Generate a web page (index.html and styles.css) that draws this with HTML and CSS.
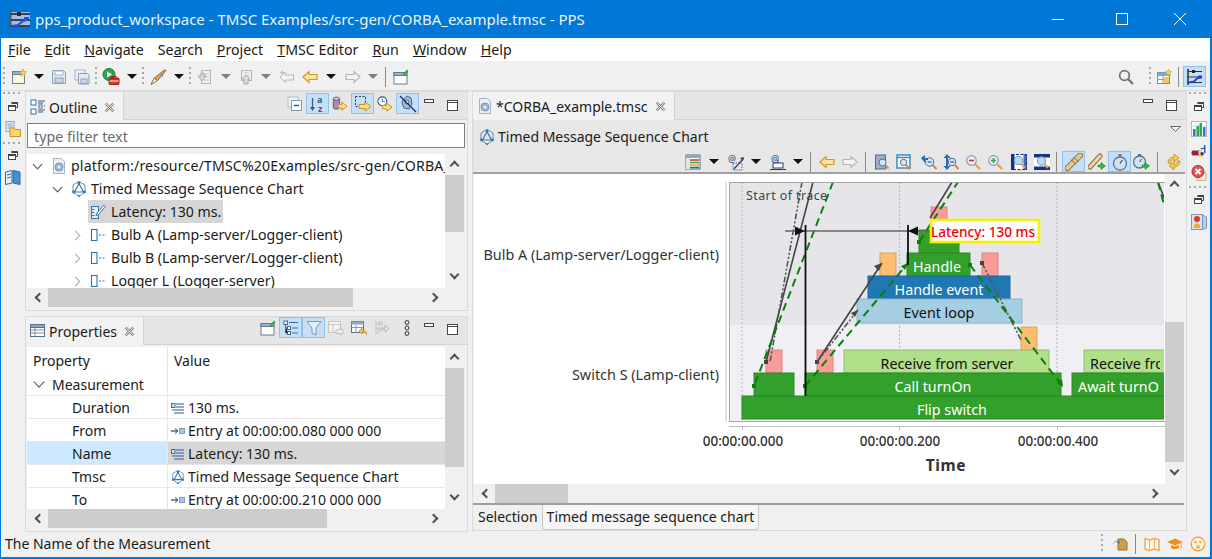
FILE: index.html
```html
<!DOCTYPE html>
<html lang="en">
<head>
<meta charset="utf-8">
<title>PPS</title>
<link rel="stylesheet" href="styles.css">
</head>
<body>
<svg class="defs" width="0" height="0" aria-hidden="true">
  <symbol id="i-logo" viewBox="0 0 22 22"><rect x="2" y="4" width="19" height="15" fill="#9dc0e4"/><path d="M1.500 2v18" stroke="#4a5866" stroke-width="2"/><path d="M2 6h19M2 12h19M2 18h19" stroke="#39424e" stroke-width="1.800"/><rect x="8" y="4" width="4" height="4" fill="#26303a"/><path d="M3 18l6-1 5-4 6-2" stroke="#2a50d8" stroke-width="2.200" fill="none"/><rect x="15" y="9" width="5" height="3" fill="#2a50d8"/></symbol>
  <symbol id="i-new" viewBox="0 0 16 16"><rect x="1.500" y="2.500" width="12" height="12" fill="#fdf6dc" stroke="#6d7f92"/><rect x="1.500" y="2.500" width="12" height="3" fill="#8fb2d6" stroke="#6d7f92"/><path d="M12 0l1 2.500 2.500.5-2 1.500.5 2.500-2-1.300-2 1.300.5-2.500-2-1.500 2.500-.5z" fill="#f6d659" stroke="#c79a2a" stroke-width=".6"/></symbol>
  <symbol id="i-save" viewBox="0 0 16 16"><path d="M1.500 1.500h11l2 2v11h-13z" fill="#e4ebf3" stroke="#8aa0bb"/><rect x="4" y="2" width="8" height="4" fill="#fff" stroke="#a5b6ca"/><rect x="4" y="9" width="8" height="5" fill="#c9d6e4" stroke="#8aa0bb"/></symbol>
  <symbol id="i-saveall" viewBox="0 0 16 16"><rect x="1" y="1" width="10" height="10" fill="#eef2f6" stroke="#a3b2c4"/><path d="M4.500 4.500h9l1.500 1.500v9h-10.500z" fill="#e4ebf3" stroke="#8aa0bb"/><rect x="7" y="10" width="6" height="4.500" fill="#c9d6e4" stroke="#8aa0bb"/></symbol>
  <symbol id="i-run" viewBox="0 0 18 18"><circle cx="7" cy="6.500" r="6" fill="#2ea44f" stroke="#1c7a36"/><path d="M5 3.500l5 3-5 3z" fill="#fff"/><rect x="7" y="10" width="10" height="6.500" rx="1" fill="#d9342b" stroke="#9c1f18"/><rect x="10" y="8.500" width="4" height="2" fill="none" stroke="#9c1f18"/><path d="M7.500 13h9" stroke="#fff"/></symbol>
  <symbol id="i-pen" viewBox="0 0 18 18"><path d="M16 1.500l1 1-8.500 10-3-2.500z" fill="#d9a95a" stroke="#8b6b35"/><path d="M5.500 10l3 2.500-3 2-3.500 2 1.500-3.500z" fill="#f5e9c9" stroke="#8b6b35"/><path d="M12 6l2 2" stroke="#6a85a8" stroke-width="2"/></symbol>
  <symbol id="i-down" viewBox="0 0 16 16"><rect x="5.500" y="1.500" width="9" height="13" fill="#f1f1f1" stroke="#b5b5b5"/><path d="M8 5h5M8 8h5M8 11h5" stroke="#c2c2c2"/><path d="M2 7h3v-3h3v3h2l-4 5z" fill="#d8d8d8" stroke="#aaa"/></symbol>
  <symbol id="i-up" viewBox="0 0 16 16"><rect x="3.500" y="1.500" width="10" height="10" fill="#f1f1f1" stroke="#b5b5b5"/><path d="M6 4h5M6 7h5" stroke="#c2c2c2"/><path d="M6 15v-5h-2l4-4 4 4h-2v5z" fill="#dedede" stroke="#aaa"/></symbol>
  <symbol id="i-back-off" viewBox="0 0 16 16"><path d="M1 8l5.500-4.500v2.500h8v5h-8v2.500z" fill="#f4f4f4" stroke="#b7b7b7"/><path d="M3 1l.7 1.800 1.800.7-1.800.7-.7 1.800-.7-1.800-1.800-.7 1.800-.7z" fill="#b7b7b7"/></symbol>
  <symbol id="i-back" viewBox="0 0 16 16"><path d="M1 8l6-5.500v3h8v5h-8v3z" fill="#fbe3a2" stroke="#cf9a21" stroke-width="1.200"/></symbol>
  <symbol id="i-fwd" viewBox="0 0 16 16"><path d="M15 8l-6-5.500v3h-8v5h8v3z" fill="#f3f3f3" stroke="#b5b5b5" stroke-width="1.200"/></symbol>
  <symbol id="i-persp" viewBox="0 0 16 16"><rect x="1" y="3.500" width="13" height="11.500" fill="#fff" stroke="#6a7a8a"/><rect x="1" y="3.500" width="13" height="3" fill="#8db1d8" stroke="#6a7a8a"/><path d="M14 .5l1.500 1.500-3 3.500-1 1-1.500-.5.500-1.500z" fill="#3aa04a"/></symbol>
  <symbol id="i-search" viewBox="0 0 16 16"><circle cx="6.500" cy="6.500" r="4.800" fill="none" stroke="#777" stroke-width="1.800"/><path d="M10 10l5 5" stroke="#777" stroke-width="2.400"/></symbol>
  <symbol id="i-openp" viewBox="0 0 16 16"><rect x="1.500" y="3.500" width="12" height="11" fill="#fff" stroke="#7a8a9a"/><rect x="1.500" y="3.500" width="12" height="3.500" fill="#7fa8d4"/><path d="M1.500 10.500h12M7 7v7.500" stroke="#8a98a8"/><rect x="8" y="8" width="5" height="6" fill="#f2c56a"/><path d="M12.500 0l1 2.200 2.300.5-1.800 1.500.5 2.300-2-1.200-2 1.200.5-2.300-1.800-1.500 2.300-.5z" fill="#f6d659" stroke="#c79a2a" stroke-width=".5"/></symbol>
  <symbol id="i-tmsc-p" viewBox="0 0 18 18"><path d="M2 1v16" stroke="#222" stroke-width="1.400"/><path d="M2 3.500h14M2 9h14M2 14.500h14" stroke="#333" stroke-width="1.200"/><rect x="6" y="2" width="3" height="3" fill="#222"/><path d="M3 14.500l5-1 3-3 5-1.500" stroke="#2440cf" stroke-width="1.800" fill="none"/><rect x="12" y="7.500" width="4" height="3" fill="#2440cf"/></symbol>
  <symbol id="i-restore" viewBox="0 0 12 12"><path d="M4.500 1.500h6v5h-2" fill="none" stroke="#444"/><rect x="1.500" y="4.500" width="7" height="5" fill="#fff" stroke="#444"/><path d="M4.500 1.500h6v1.500h-6zM1.500 4.500h7v1.500h-7z" fill="#444"/></symbol>
  <symbol id="i-folder" viewBox="0 0 16 16"><rect x="1" y="0.500" width="8" height="10" fill="#e8eef6" stroke="#8aa4c4"/><path d="M2.500 3h5M2.500 5h5M2.500 7h5" stroke="#8aa4c4"/><path d="M5 7h4l1 1.500h5.500v7h-10.500z" fill="#fbd66b" stroke="#c89524"/></symbol>
  <symbol id="i-book" viewBox="0 0 16 16"><path d="M.5 2l6.500-1.500v12.500l-6.500 1.500z" fill="#e8f0fa" stroke="#2a6aa8"/><path d="M8 .5l7 1.500v12.500l-7-1.500z" fill="#4a90d0" stroke="#2a6aa8"/><path d="M2 5l4-1M2 8l4-1" stroke="#2a6aa8"/></symbol>
  <symbol id="i-chart" viewBox="0 0 16 16"><rect x=".5" y=".5" width="15" height="15" fill="#fff" stroke="#a8b4c4"/><path d="M.5 5h15M.5 10h15M5 .5v15M10 .5v15" stroke="#d6dce4"/><rect x="2" y="8" width="2.500" height="7" fill="#2a7fc0"/><rect x="5.500" y="5" width="2.500" height="10" fill="#2ea84a"/><rect x="8.500" y="2" width="2.500" height="13" fill="#2ea84a"/><rect x="12" y="6" width="2.500" height="9" fill="#2a7fc0"/></symbol>
  <symbol id="i-tasks" viewBox="0 0 18 16"><circle cx="3.500" cy="9" r="3" fill="#a81c36"/><circle cx="8" cy="9" r="3" fill="#7d1f58"/><path d="M8 7l4-1 2 7-5 1z" fill="#f6d659"/><path d="M11 4.500l4-1M15.500 0v9" stroke="#2440a8" stroke-width="1.400"/><circle cx="12.500" cy="10" r="2" fill="#2a3a90"/></symbol>
  <symbol id="i-error" viewBox="0 0 16 16"><path d="M6 8h9v7.500h-9z" fill="#f3ead0" stroke="#c2b892"/><circle cx="7" cy="6.500" r="6" fill="#e05a52" stroke="#b52c24"/><path d="M4.500 4l5 5M9.500 4l-5 5" stroke="#fff" stroke-width="1.800"/></symbol>
  <symbol id="i-red" viewBox="0 0 16 16"><rect x=".5" y=".5" width="11" height="15" fill="#d7e2ee" stroke="#7a97b8"/><path d="M11.500 1l4 2v11l-4 1.500z" fill="#b8cfe6" stroke="#7a97b8"/><circle cx="6" cy="5" r="3" fill="#e0342a"/><path d="M3 14v-3l3-2 3 2v3z" fill="#f4a830"/></symbol>
  <symbol id="i-outline" viewBox="0 0 16 16"><g fill="#fff" stroke="#2e73b0"><rect x="1" y="1" width="5" height="5"/><rect x="1" y="10" width="5" height="5"/></g><rect x="9" y="6" width="3" height="3" fill="#fff" stroke="#2e73b0"/><path d="M8 2h7M8 4h5M14 7h1M8 11h7M8 13h5" stroke="#4a5560"/></symbol>
  <symbol id="i-collapse" viewBox="0 0 16 16"><rect x="1" y="1" width="10" height="10" fill="#eef2f6" stroke="#b3c0cf"/><rect x="4.500" y="4.500" width="10" height="10" fill="#fff" stroke="#7f9ab8"/><path d="M7 9.500h5" stroke="#2a5c92" stroke-width="1.500"/></symbol>
  <symbol id="i-db" viewBox="0 0 18 18"><path d="M1.500 3v10c0 2.500 7 2.500 7 0v-10z" fill="#a68bb8" stroke="#5f4a78"/><ellipse cx="5" cy="3" rx="3.500" ry="1.800" fill="#d8c8e0" stroke="#5f4a78"/><path d="M7 9.500h4v-2.500l6 4.500-6 4.500v-2.500h-4z" fill="#f7dc8a" stroke="#c4901f"/></symbol>
  <symbol id="i-sel" viewBox="0 0 18 18"><rect x="1.500" y="1.500" width="10" height="10" fill="none" stroke="#1e3f78" stroke-dasharray="2 1.500"/><path d="M5 9.500h6v-2.500l6 4.500-6 4.500v-2.500h-6z" fill="#f7dc8a" stroke="#c4901f"/></symbol>
  <symbol id="i-clock" viewBox="0 0 18 18"><circle cx="6" cy="6" r="5" fill="#fff" stroke="#2a5c92" stroke-width="1.200"/><path d="M6 3v3.500h2.500" stroke="#2a5c92" fill="none"/><path d="M6 10.500h5v-2.500l6 4.500-6 4.500v-2.500h-5z" fill="#f7dc8a" stroke="#c4901f"/></symbol>
  <symbol id="i-nofilter" viewBox="0 0 18 18"><path d="M4 5l4-4 4 2 1 6-3 5-5-1-2-5z" fill="#a8bcd4" stroke="#4a6484"/><circle cx="8" cy="7" r="2" fill="#fff" stroke="#4a6484"/><path d="M1 1l16 16" stroke="#1a3a6a" stroke-width="1.500"/></symbol>
  <symbol id="i-min" viewBox="0 0 12 8"><rect x=".5" y=".5" width="9" height="3" fill="#fff" stroke="#444"/></symbol>
  <symbol id="i-max" viewBox="0 0 12 12"><rect x=".5" y=".5" width="10" height="10" fill="#fff" stroke="#444"/><path d="M.5 2.500h10" stroke="#444"/></symbol>
  <symbol id="i-x" viewBox="0 0 10 10"><path d="M1.500 1.500l7 7M8.500 1.500l-7 7" stroke="#8a8a8a" stroke-width="2.400"/><path d="M1.500 1.500l7 7M8.500 1.500l-7 7" stroke="#f3f3f3" stroke-width=".8"/></symbol>
  <symbol id="i-gear" viewBox="0 0 16 16"><path d="M2.500.5h8l3 3v12h-11z" fill="#e9eef5" stroke="#a7b4c4"/><circle cx="8" cy="9" r="4" fill="#9db6d2" stroke="#7a95b5"/><circle cx="8" cy="9" r="1.500" fill="#e9eef5"/></symbol>
  <symbol id="i-tm" viewBox="0 0 16 16"><path d="M8 2.500l4.500 8.500h-9z" fill="none" stroke="#3a74a8" stroke-width="1.200"/><path d="M8 .5l6 3.500v7l-6 4.500-6-4.500v-7z" fill="none" stroke="#3a74a8" stroke-width=".8"/><circle cx="8" cy="2" r="1.400" fill="#3a74a8"/><circle cx="2.500" cy="11" r="1.400" fill="#3a74a8"/><circle cx="13.500" cy="11" r="1.400" fill="#3a74a8"/><circle cx="8" cy="15" r="1" fill="#3a74a8"/></symbol>
  <symbol id="i-meas" viewBox="0 0 16 16"><rect x="1.500" y="2.500" width="7" height="12" fill="#e4eefa" stroke="#3a74a8"/><path d="M1.500 5.500h3M1.500 8.500h3M1.500 11.500h3" stroke="#3a74a8"/><path d="M14 1l1.500 1.500-7 8-2.500 1 1-2.500z" fill="#fff" stroke="#3a74a8"/></symbol>
  <symbol id="i-life" viewBox="0 0 16 16"><rect x="1.500" y="2.500" width="5.500" height="11" fill="#fff" stroke="#2e73b0" stroke-width="1.100"/><path d="M9 8h2M12.500 8h2" stroke="#2e73b0"/></symbol>
  <symbol id="i-table" viewBox="0 0 16 16"><rect x=".5" y="1.500" width="14" height="12" fill="#fff" stroke="#5c6f88"/><rect x=".5" y="1.500" width="14" height="3" fill="#8fa8c6" stroke="#5c6f88"/><path d="M.5 7h14M.5 10h14M5 4.500v9" stroke="#7f93ab"/></symbol>
  <symbol id="i-tree" viewBox="0 0 16 16"><g fill="#fff" stroke="#3e6a96"><rect x="1" y="1" width="3.500" height="3.500"/><rect x="4.500" y="6.500" width="3" height="3"/><rect x="4.500" y="11.500" width="3" height="3"/></g><path d="M2.500 4.500v8.500h2M2.500 8h2M6 2.500h9M9 8h6M9 13h6" stroke="#3e6a96"/></symbol>
  <symbol id="i-funnel" viewBox="0 0 16 16"><path d="M1 1.500h14l-5 6.500v7l-4-2v-5z" fill="#e2eef8" stroke="#7a95b5"/></symbol>
  <symbol id="i-pin-off" viewBox="0 0 16 16"><rect x=".5" y="1.500" width="12" height="11" fill="#f2f2f2" stroke="#c4c4c4"/><path d="M.5 4.500h12M5 4.500v8" stroke="#c9c9c9"/><path d="M8 10l5-.5v-2l3 4-3 4v-2h-5z" fill="#ececec" stroke="#bdbdbd"/></symbol>
  <symbol id="i-undo" viewBox="0 0 16 16"><rect x=".5" y="1.500" width="12" height="11" fill="#fff" stroke="#5c6f88"/><rect x=".5" y="1.500" width="12" height="3" fill="#8fa8c6"/><path d="M.5 7.500h12M5 4.500v8" stroke="#8a9bb0"/><path d="M8 11l3-3v2c3 0 4.500 1.500 4.500 4.500-1-2-2.500-2.500-4.500-2.500v2z" fill="#f6c94e" stroke="#c18b16" stroke-width=".7"/></symbol>
  <symbol id="i-tree-off" viewBox="0 0 16 16"><path d="M2 1v13M2 4h3M2 9h3M2 13h3" stroke="#c0c0c0"/><rect x="5" y="2" width="3" height="3" fill="none" stroke="#bdbdbd"/><rect x="5" y="8" width="3" height="3" fill="none" stroke="#bdbdbd"/><path d="M8 8h3V5l4 3.500-4 3.500V9H8z" fill="#e8e8e8" stroke="#b9b9b9"/></symbol>
  <symbol id="i-dots" viewBox="0 0 8 16"><g fill="#fff" stroke="#5b5b5b" stroke-width="1.300"><circle cx="4" cy="2.500" r="1.800"/><circle cx="4" cy="8" r="1.800"/><circle cx="4" cy="13.500" r="1.800"/></g></symbol>
  <symbol id="i-list" viewBox="0 0 14 12"><rect x=".5" y="1.500" width="3.500" height="4" fill="#cfe3f6" stroke="#2e73b0"/><path d="M5 2h8M5 5h8M1 8h12M3 11h10" stroke="#2a5c92" stroke-width="1.100"/></symbol>
  <symbol id="i-entry" viewBox="0 0 14 12"><path d="M0 6h6" stroke="#2a4a72" stroke-width="1.200"/><path d="M4 3.500l3 2.500-3 2.500" fill="none" stroke="#2a4a72"/><rect x="8.500" y="3.500" width="5" height="5" fill="#a9c4de" stroke="#7fa0c0"/></symbol>
  <symbol id="i-legend" viewBox="0 0 16 16"><rect x="1" y="1" width="14" height="14" fill="#fff" stroke="#5a6a7a"/><rect x="1" y="1" width="14" height="3" fill="#8fa8c6"/><path d="M1 4v11h4V4z" fill="#dfe5ec"/><path d="M5 6h9" stroke="#d43a2c" stroke-width="1.600"/><path d="M5 8.500h9" stroke="#2ea84a" stroke-width="1.600"/><path d="M5 11h9" stroke="#e7a530" stroke-width="1.600"/><path d="M5 13.500h9" stroke="#2a6aa8" stroke-width="1.600"/></symbol>
  <symbol id="i-zpage" viewBox="0 0 16 16"><rect x="1.500" y="1" width="10" height="14" fill="#9fadc8" stroke="#4e6a94"/><circle cx="8.500" cy="8.500" r="3.500" fill="#d8e6f4" stroke="#4e6a94"/><path d="M11 11l3.500 3.500" stroke="#d08a3a" stroke-width="2"/></symbol>
  <symbol id="i-zpage2" viewBox="0 0 16 16"><rect x="1" y="1" width="13" height="13" fill="#fff" stroke="#2a86c8" stroke-width="1.400"/><path d="M1 3.500h13" stroke="#2a86c8" stroke-width="1.400"/><circle cx="7.500" cy="8.500" r="3.200" fill="#d8e6f4" stroke="#4e6a94"/><path d="M10 11l4 4" stroke="#d08a3a" stroke-width="2"/></symbol>
  <symbol id="i-zh-" viewBox="0 0 16 16"><circle cx="8.500" cy="8" r="4.200" fill="#d8e6f4" stroke="#4e6a94"/><path d="M6.500 8h4" stroke="#1f3f78"/><path d="M0 4l4-3v3h3v2H4v3z" fill="#1f6fc0"/><path d="M11.500 11l4 4" stroke="#d08a3a" stroke-width="2"/></symbol>
  <symbol id="i-zv-" viewBox="0 0 16 16"><path d="M4 0l3.500 4h-7zM4 16L.5 12h7z" fill="#1f6fc0"/><rect x="3" y="3" width="2" height="10" fill="#1f6fc0"/><circle cx="9" cy="8" r="3.800" fill="#d8e6f4" stroke="#4e6a94"/><path d="M7 8h4" stroke="#1f3f78"/><path d="M12 11l3.500 4" stroke="#d08a3a" stroke-width="2"/></symbol>
  <symbol id="i-zout" viewBox="0 0 16 16"><circle cx="6.500" cy="6.500" r="4.800" fill="#e6eef6" stroke="#8a9bb0" stroke-width="1.200"/><path d="M4 6.500h5" stroke="#c8342a" stroke-width="1.600"/><path d="M10 10l5 5" stroke="#e4a060" stroke-width="2.400"/></symbol>
  <symbol id="i-zin" viewBox="0 0 16 16"><circle cx="6.500" cy="6.500" r="4.800" fill="#e6eef6" stroke="#8a9bb0" stroke-width="1.200"/><path d="M4 6.500h5M6.500 4v5" stroke="#2ea84a" stroke-width="1.600"/><path d="M10 10l5 5" stroke="#e4a060" stroke-width="2.400"/></symbol>
  <symbol id="i-zfit" viewBox="0 0 16 16"><rect x=".5" y=".5" width="15" height="15" fill="#fff" stroke="#12358c" stroke-dasharray="3 1.500"/><rect x="0" y="0" width="3.500" height="16" fill="#12358c"/><rect x="12.500" y="0" width="3.500" height="16" fill="#12358c" opacity=".75"/><circle cx="7.500" cy="6.500" r="4.200" fill="#bcd8f0" stroke="#6f94b8"/><path d="M10.500 10l3.500 4" stroke="#e4a060" stroke-width="2.200"/></symbol>
  <symbol id="i-zfit2" viewBox="0 0 16 16"><rect x="0" y="0" width="16" height="16" fill="#fff"/><rect x="0" y="0" width="16" height="3.500" fill="#12358c"/><rect x="0" y="12.500" width="16" height="3.500" fill="#12358c"/><circle cx="7.500" cy="7" r="4.200" fill="#bcd8f0" stroke="#6f94b8"/><path d="M10.500 10l3.500 4" stroke="#e4a060" stroke-width="2.200"/></symbol>
  <symbol id="i-chain" viewBox="0 0 18 18"><path d="M2.500 15L15 2.500" stroke="#8a6d34" stroke-width="6" stroke-linecap="round"/><path d="M2.500 15L15 2.500" stroke="#e6c98d" stroke-width="4" stroke-linecap="round"/><path d="M6 6.500l5 5M8.500 4l5 5" stroke="#8a6d34"/></symbol>
  <symbol id="i-chain-go" viewBox="0 0 18 18"><path d="M2 14L12 3" stroke="#8a6d34" stroke-width="5" stroke-linecap="round"/><path d="M2 14L12 3" stroke="#ecd6a8" stroke-width="3" stroke-linecap="round"/><path d="M10 12h3v-2.500l4.500 3.500-4.500 3.500v-2.500h-3z" fill="#2eb84a" stroke="#1c8a34" stroke-width=".6"/></symbol>
  <symbol id="i-watch" viewBox="0 0 18 18"><circle cx="9" cy="10.500" r="6.500" fill="#d2e2f1" stroke="#5f7288" stroke-width="1.300"/><path d="M9 10.500l2.500-3.500" stroke="#2a4a72" stroke-width="1.200"/><rect x="7.500" y="1" width="3" height="2" fill="#5f7288"/></symbol>
  <symbol id="i-watch-go" viewBox="0 0 18 18"><circle cx="7.500" cy="9" r="6" fill="#d2e2f1" stroke="#5f7288" stroke-width="1.300"/><path d="M7.500 9l2-3" stroke="#2a4a72"/><rect x="6" y="1" width="3" height="2" fill="#5f7288"/><path d="M10 12h3v-2.500l4.500 3.500-4.500 3.500v-2.500h-3z" fill="#2eb84a" stroke="#1c8a34" stroke-width=".6"/></symbol>
  <symbol id="i-sync" viewBox="0 0 16 16"><path d="M2 9c0-4 3-6 6-6V0l5 4-5 4V5.500c-2 0-3.500 1.500-3.500 4z" fill="#f6c94e" stroke="#c18b16" stroke-width=".8"/><path d="M14 7c0 4-3 6-6 6v3l-5-4 5-4v2.500c2 0 3.500-1.500 3.500-3.500z" fill="#f6c94e" stroke="#c18b16" stroke-width=".8"/></symbol>
  <symbol id="i-note" viewBox="0 0 16 16"><path d="M5 3h6l3 3v8h-9z" fill="#c9a24c" stroke="#8f7430"/><path d="M1 8c0-3 3-3 4-2l-1 1 3 .5-.5-3-1 1c-2-2-5 0-5 3z" fill="#777"/></symbol>
  <symbol id="i-map" viewBox="0 0 16 16"><path d="M1 2.500l4.500 1.500 5-1.500 4.500 1.500v10.500l-4.500-1.500-5 1.500-4.500-1.500z" fill="#fff7ea" stroke="#ec9b38" stroke-width="1.200"/><path d="M5.500 4v10.500M10.500 2.500v10.500" stroke="#f0b060"/></symbol>
  <symbol id="i-cap" viewBox="0 0 16 16"><path d="M0 6l8-3.500 8 3.500-8 3.500z" fill="#ec8f20"/><path d="M4 9v3c2 1.500 6 1.500 8 0V9l-4 1.500z" fill="#ec8f20"/><path d="M14 7v5" stroke="#ec8f20"/></symbol>
  <symbol id="i-face" viewBox="0 0 16 16"><circle cx="8" cy="8" r="6.800" fill="#fff3dc" stroke="#ec9b38" stroke-width="1.200"/><circle cx="5.500" cy="6" r="1.500" fill="#f2b562"/><circle cx="10.500" cy="6" r="1.500" fill="#f2b562"/><circle cx="8" cy="11" r="2" fill="#f2b562"/></symbol>
</svg>

<div class="window">
  <header class="titlebar">
    <svg class="title-logo"><use href="#i-logo"/></svg>
    <span class="title-text">pps_product_workspace - TMSC Examples/src-gen/CORBA_example.tmsc - PPS</span>
    <div class="winctl">
      <svg class="winbtn" viewBox="0 0 58 38"><path d="M17 19.500h12" stroke="#fff"/></svg>
      <svg class="winbtn" viewBox="0 0 58 38"><rect x="23.500" y="13.500" width="11" height="11" fill="none" stroke="#fff"/></svg>
      <svg class="winbtn" viewBox="0 0 58 38"><path d="M23 13l12 12M35 13l-12 12" stroke="#fff"/></svg>
    </div>
  </header>

  <nav class="menubar">
    <span><u>F</u>ile</span><span><u>E</u>dit</span><span><u>N</u>avigate</span><span>Se<u>a</u>rch</span><span><u>P</u>roject</span><span><u>T</u>MSC Editor</span><span><u>R</u>un</span><span><u>W</u>indow</span><span><u>H</u>elp</span>
  </nav>

  <div class="toolbar">
    <span class="grip first"></span>
    <svg class="ic16"><use href="#i-new"/></svg><span class="drop"></span>
    <svg class="ic16"><use href="#i-save"/></svg>
    <svg class="ic16"><use href="#i-saveall"/></svg>
    <span class="grip"></span>
    <svg class="ic18"><use href="#i-run"/></svg><span class="drop"></span>
    <span class="grip"></span>
    <svg class="ic18"><use href="#i-pen"/></svg><span class="drop"></span>
    <span class="grip"></span>
    <svg class="ic16"><use href="#i-down"/></svg><span class="drop off ml2"></span>
    <svg class="ic16"><use href="#i-up"/></svg><span class="drop off"></span>
    <svg class="ic16 ml1"><use href="#i-back-off"/></svg>
    <svg class="ic16"><use href="#i-back"/></svg><span class="drop ml1"></span>
    <svg class="ic16 ml2"><use href="#i-fwd"/></svg><span class="drop off"></span>
    <span class="vsep"></span>
    <svg class="ic16"><use href="#i-persp"/></svg>
    <span class="spacer"></span>
    <svg class="ic16"><use href="#i-search"/></svg>
    <span class="grip g-right"></span>
    <svg class="ic16"><use href="#i-openp"/></svg>
    <span class="vsep v-right"></span>
    <span class="hl"><svg class="ic18"><use href="#i-tmsc-p"/></svg></span>
  </div>

  <div class="workbench">
    <aside class="trim">
      <span class="hgrip"></span>
      <svg class="ic12"><use href="#i-restore"/></svg>
      <svg class="ic16"><use href="#i-folder"/></svg>
      <span class="hgrip"></span>
      <svg class="ic12"><use href="#i-restore"/></svg>
      <svg class="ic16"><use href="#i-book"/></svg>
    </aside>

    <div class="leftcol">
      <section class="panel outline">
        <div class="tabbar">
          <div class="tab"><svg class="ic16"><use href="#i-outline"/></svg><span>Outline</span><svg class="close"><use href="#i-x"/></svg></div>
          <div class="viewtools">
            <svg class="ic16"><use href="#i-collapse"/></svg>
            <span class="hl"><svg class="ic18 az-icon" viewBox="0 0 18 18"><path d="M3.500 3v11" stroke="#3a5a80" stroke-width="1.300"/><path d="M1 12l2.500 4 2.500-4z" fill="#3a5a80"/><text class="az-text" x="8" y="8"><tspan class="az-a">a</tspan><tspan class="az-z" x="9" dy="9">z</tspan></text></svg></span>
            <svg class="ic16"><use href="#i-db"/></svg>
            <span class="hl"><svg class="ic18"><use href="#i-sel"/></svg></span>
            <svg class="ic16"><use href="#i-clock"/></svg>
            <span class="hl"><svg class="ic18"><use href="#i-nofilter"/></svg></span>
            <svg class="minbtn"><use href="#i-min"/></svg>
            <svg class="maxbtn"><use href="#i-max"/></svg>
          </div>
        </div>
        <div class="filter">type filter text</div>
        <div class="scrollview tree-view">
          <div class="content">
            <div class="tree-row l0"><i class="tw open"></i><svg class="ic16"><use href="#i-gear"/></svg><span class="label">platform:/resource/TMSC%20Examples/src-gen/CORBA_</span></div>
            <div class="tree-row l1"><i class="tw open"></i><svg class="ic16"><use href="#i-tm"/></svg><span class="label">Timed Message Sequence Chart</span></div>
            <div class="tree-row l2"><i class="tw none"></i><span class="sel"><svg class="ic16"><use href="#i-meas"/></svg><span class="label">Latency: 130 ms.</span></span></div>
            <div class="tree-row l2"><i class="tw shut"></i><svg class="ic16"><use href="#i-life"/></svg><span class="label">Bulb A (Lamp-server/Logger-client)</span></div>
            <div class="tree-row l2"><i class="tw shut"></i><svg class="ic16"><use href="#i-life"/></svg><span class="label">Bulb B (Lamp-server/Logger-client)</span></div>
            <div class="tree-row l2"><i class="tw shut"></i><svg class="ic16"><use href="#i-life"/></svg><span class="label">Logger L (Logger-server)</span></div>
          </div>
          <div class="vbar v-outline"><i class="arr up"></i><b></b><i class="arr dn"></i></div>
          <div class="hbar h-outline"><i class="arr lf"></i><b></b><i class="arr rt"></i></div>
        </div>
      </section>

      <section class="panel props">
        <div class="tabbar">
          <div class="tab"><svg class="ic16"><use href="#i-table"/></svg><span>Properties</span><svg class="close"><use href="#i-x"/></svg></div>
          <div class="viewtools vt-props">
            <svg class="ic16"><use href="#i-persp"/></svg>
            <span class="hl"><svg class="ic16"><use href="#i-tree"/></svg></span>
            <span class="hl joined"><svg class="ic16"><use href="#i-funnel"/></svg></span>
            <svg class="ic16"><use href="#i-pin-off"/></svg>
            <svg class="ic16 ml4"><use href="#i-undo"/></svg>
            <svg class="ic16 ml4"><use href="#i-tree-off"/></svg>
            <svg class="dots"><use href="#i-dots"/></svg>
            <svg class="minbtn"><use href="#i-min"/></svg>
            <svg class="maxbtn"><use href="#i-max"/></svg>
          </div>
        </div>
        <div class="scrollview prop-view">
          <div class="content">
            <div class="prow head"><div>Property</div><div>Value</div></div>
            <div class="prow group"><div><i class="tw open"></i>Measurement</div><div></div></div>
            <div class="prow"><div class="key">Duration</div><div class="val"><svg class="ic14"><use href="#i-list"/></svg>130 ms.</div></div>
            <div class="prow"><div class="key">From</div><div class="val"><svg class="ic14"><use href="#i-entry"/></svg>Entry at 00:00:00.080 000 000</div></div>
            <div class="prow picked"><div class="key">Name</div><div class="val"><svg class="ic14"><use href="#i-list"/></svg>Latency: 130 ms.</div></div>
            <div class="prow"><div class="key">Tmsc</div><div class="val"><svg class="ic14"><use href="#i-tm"/></svg>Timed Message Sequence Chart</div></div>
            <div class="prow"><div class="key">To</div><div class="val"><svg class="ic14"><use href="#i-entry"/></svg>Entry at 00:00:00.210 000 000</div></div>
          </div>
          <div class="vbar v-props"><i class="arr up"></i><b></b><i class="arr dn"></i></div>
          <div class="hbar h-props"><i class="arr lf"></i><b></b><i class="arr rt"></i></div>
        </div>
      </section>
    </div>

    <section class="panel editor">
      <div class="tabbar">
        <div class="tab"><svg class="ic16"><use href="#i-gear"/></svg><span>*CORBA_example.tmsc</span><svg class="close"><use href="#i-x"/></svg></div>
        <div class="viewtools">
          <svg class="minbtn"><use href="#i-min"/></svg>
          <svg class="maxbtn"><use href="#i-max"/></svg>
        </div>
      </div>
      <div class="form-head">
        <div class="form-title"><svg class="ic16"><use href="#i-tm"/></svg><span>Timed Message Sequence Chart</span>
          <svg class="menu-tri" viewBox="0 0 11 6"><path d="M.5.5h10l-5 5z" fill="#f7f7f7" stroke="#666"/></svg></div>
        <div class="form-tools">
          <svg class="ic16"><use href="#i-legend"/></svg><span class="drop ml2"></span>
          <svg class="ic18 ml2" viewBox="0 0 18 18"><text x="1" y="9" class="svg-at">@</text><path d="M7 16l9-10" stroke="#1f3f78" stroke-width="1.300"/><path d="M13 5l4-1-1 4z" fill="#1f3f78"/><rect x="6" y="10" width="9" height="7" fill="none" stroke="#666" stroke-dasharray="1.500 1"/></svg><span class="drop"></span>
          <svg class="ic18 ml2" viewBox="0 0 18 18"><text x="2" y="9" class="svg-at">@</text><rect x="4" y="10" width="10" height="5" fill="#fff" stroke="#1f3f78"/><path d="M9 7v3M1 16.500h16" stroke="#1f3f78"/></svg><span class="drop"></span>
          <span class="vsep ml1"></span>
          <svg class="ic16 ml2"><use href="#i-back"/></svg>
          <svg class="ic16 ml1"><use href="#i-fwd"/></svg>
          <span class="vsep ml1"></span>
          <svg class="ic16 ml2"><use href="#i-zpage"/></svg>
          <svg class="ic16"><use href="#i-zpage2"/></svg>
          <svg class="ic16 ml3"><use href="#i-zh-"/></svg>
          <svg class="ic16"><use href="#i-zv-"/></svg>
          <svg class="ic16"><use href="#i-zout"/></svg>
          <svg class="ic16"><use href="#i-zin"/></svg>
          <svg class="ic16 ml2"><use href="#i-zfit"/></svg>
          <svg class="ic16 ml1"><use href="#i-zfit2"/></svg>
          <span class="vsep"></span>
          <span class="hl mn1"><svg class="ic18"><use href="#i-chain"/></svg></span>
          <svg class="ic18 mn3"><use href="#i-chain-go"/></svg>
          <span class="hl mn4"><svg class="ic18"><use href="#i-watch"/></svg></span>
          <svg class="ic18 mn5"><use href="#i-watch-go"/></svg>
          <span class="vsep ml1"></span>
          <svg class="ic16 ml2"><use href="#i-sync"/></svg>
        </div>
      </div>
      <div class="chart-area">
        <svg class="chart" viewBox="474 174 691 310">
          <defs>
            <clipPath id="plotclip"><rect x="729" y="182" width="435" height="241"/></clipPath>
            <clipPath id="cut-rcv"><rect x="1085" y="350" width="75" height="23"/></clipPath>
          </defs>
          <text class="ylabel" x="719" y="260">Bulb A (Lamp-server/Logger-client)</text>
          <text class="ylabel" x="719" y="380">Switch S (Lamp-client)</text>
          <path class="frame2" d="M726 182v240"/>
          <g clip-path="url(#plotclip)">
            <rect class="band1" x="729" y="182" width="436" height="143"/>
            <rect class="band2" x="729" y="325" width="436" height="96"/>
            <path class="grid" d="M742 182v240M899.500 182v240M1057 182v240"/>
            <text class="start" x="746" y="200">Start of trace</text>
            <rect class="pink" x="931" y="207" width="16" height="23"/>
            <rect class="dgreen" x="919" y="230" width="40" height="23"/>
            <rect class="orange" x="880" y="253" width="16" height="23"/>
            <rect class="pink" x="982" y="253" width="16" height="23"/>
            <rect class="dgreen" x="907" y="253" width="63" height="23"/>
            <rect class="blue" x="868" y="276" width="142" height="23"/>
            <rect class="lblue" x="857" y="299" width="165" height="24"/>
            <rect class="orange" x="1021" y="327" width="16" height="23"/>
            <rect class="pink" x="766" y="350" width="16" height="23"/>
            <rect class="pink" x="817" y="350" width="16" height="23"/>
            <rect class="lgreen" x="844" y="350" width="205" height="23"/>
            <rect class="lgreen" x="1084" y="350" width="90" height="23"/>
            <rect class="dgreen" x="754" y="373" width="40" height="23"/>
            <rect class="dgreen" x="805" y="373" width="256" height="23"/>
            <rect class="dgreen" x="1072" y="373" width="100" height="23"/>
            <rect class="dgreen" x="742" y="396" width="430" height="23"/>
            <text class="bar-w" x="937" y="272">Handle</text>
            <text class="bar-w" x="939" y="295">Handle event</text>
            <text class="bar-k" x="939" y="318">Event loop</text>
            <text class="bar-k" x="947" y="369">Receive from server</text>
            <text class="bar-k start-a" x="1090" y="369" clip-path="url(#cut-rcv)">Receive fro</text>
            <text class="bar-w" x="933" y="392">Call turnOn</text>
            <text class="bar-w start-a" x="1078" y="392">Await turnO</text>
            <text class="bar-w" x="952" y="415">Flip switch</text>

            <path class="ln-grey" d="M813 182L766 362M882 263L817 362M930 218L952 182M1158 182L1165 200"/>
            <path class="ln-dd" d="M802 182L770 362M858 310L817 362M982 263L1021 340"/>
            <path class="ln-green" d="M833 182L754 386M805 386L908 263M919 242L958 182M970 265L1063 387M1158 182L1164 205"/>
            <path class="tip-grey" d="M882 263l-8 3 5 5zM858 310l-7 3 4 4z"/>
            <path class="tip-green" d="M908 263l-7 3 4 4zM1063 387l-1-8-5 4z"/>
            <rect class="dot-g" x="752" y="384" width="4" height="4"/>
            <rect class="dot-g" x="803" y="384" width="4" height="4"/>
            <rect class="dot-g" x="917" y="240" width="4" height="4"/>
            <rect class="dot-g" x="968" y="263" width="4" height="4"/>
            <rect class="dot-k" x="764" y="360" width="4" height="4"/>
            <rect class="dot-k" x="815" y="360" width="4" height="4"/>
            <rect class="dot-k" x="980" y="261" width="4" height="4"/>

            <path class="measure-h" d="M785 231H930"/>
            <path class="measure-v" d="M805.500 225V396M908 225V265"/>
            <path class="arrowhead" d="M805 231l-10-4.500v9zM908 231l10-4.500v9z"/>
            <rect class="lat-box" x="931" y="220" width="108" height="22"/>
            <text class="lat-text" x="931" y="237">Latency: 130 ms</text>
          </g>
          <rect class="frame" x="729.500" y="182.500" width="440" height="239"/>
          <path class="axis" d="M729 426.500H1165M742.500 426v4M899.500 426v4M1057.500 426v4"/>
          <text class="tick" x="743" y="446">00:00:00.000</text>
          <text class="tick" x="900" y="446">00:00:00.200</text>
          <text class="tick" x="1058" y="446">00:00:00.400</text>
          <text class="axis-title" x="946" y="471">Time</text>
        </svg>
        <div class="vbar v-chart"><i class="arr up"></i><b></b><i class="arr dn"></i></div>
        <div class="hbar h-chart"><i class="arr lf"></i><b></b><i class="arr rt"></i></div>
      </div>
      <div class="bottom-tabs">
        <span class="btab">Selection</span>
        <span class="btab on">Timed message sequence chart</span>
      </div>
    </section>

    <aside class="trim trim-r">
      <span class="hgrip"></span>
      <svg class="ic12"><use href="#i-restore"/></svg>
      <svg class="ic16"><use href="#i-chart"/></svg>
      <svg class="ic16"><use href="#i-tasks"/></svg>
      <svg class="ic16"><use href="#i-error"/></svg>
      <span class="hgrip"></span>
      <svg class="ic12"><use href="#i-restore"/></svg>
      <svg class="ic16"><use href="#i-red"/></svg>
    </aside>
  </div>

  <footer class="status">
    <span class="status-text">The Name of the Measurement</span>
    <span class="grip"></span>
    <svg class="ic16"><use href="#i-note"/></svg>
    <span class="vsep"></span>
    <svg class="ic16"><use href="#i-map"/></svg>
    <svg class="ic16"><use href="#i-cap"/></svg>
    <svg class="ic16"><use href="#i-face"/></svg>
  </footer>
</div>
</body>
</html>
```

FILE: styles.css
```css
* { box-sizing: border-box; }
html, body { margin: 0; padding: 0; }
body { width: 1212px; height: 559px; overflow: hidden; font-family: "Noto Sans", sans-serif; font-size: 14px; color: #1a1a1a; background: #f0f0f0; }
.defs { position: absolute; }
svg { display: block; flex: none; }
.az-icon { overflow: visible; }
.az-text { font: bold 9px "Noto Sans", sans-serif; }
.az-a { fill: #2a6a9a; }
.az-z { fill: #8a3a8a; }
.svg-at { font: 9px "Noto Sans", sans-serif; fill: #1f3f78; }

.window { width: 1212px; height: 559px; display: flex; flex-direction: column; border: 1px solid #0078d7; border-top: 0; border-bottom-width: 2px; border-right-width: 2px; background: #f0f0f0; overflow: hidden; }

.titlebar { height: 38px; background: #0078d7; margin: 0 -2px 0 -1px; display: flex; align-items: center; padding-left: 9px; flex: none; }
.title-logo { width: 22px; height: 22px; }
.title-text { margin-left: 4px; color: #e9f2fb; font-size: 15px; white-space: nowrap; }
.winctl { margin-left: auto; margin-right: 3px; display: flex; }
.winbtn { width: 58px; height: 38px; }

.menubar { height: 23px; background: #fff; display: flex; align-items: center; gap: 14.100px; padding-left: 7px; flex: none; font-size: 14.200px; }

.toolbar { height: 30px; flex: none; display: flex; align-items: center; gap: 7px; padding: 2px 4px 0 2px; border-bottom: 1px solid #dcdcdc; }
.ic12 { width: 12px; height: 12px; }
.ic14 { width: 14px; height: 14px; }
.ic16 { width: 16px; height: 16px; }
.ic18 { width: 18px; height: 18px; }
.ml1 { margin-left: 1px; }
.ml2 { margin-left: 2px; }
.ml3 { margin-left: 3px; }
.ml4 { margin-left: 4px; }
.mn1 { margin-left: -1px; }
.mn3 { margin-left: -3px; }
.mn4 { margin-left: -4px; }
.mn5 { margin-left: -5px; }
.grip { width: 2px; height: 20px; margin: 0 -2px; background: repeating-linear-gradient(to bottom, #a8a8a8 0 2px, transparent 2px 5px); flex: none; }
.grip.first { margin: 0 -1px 0 0; }
.drop { width: 0; height: 0; border: 5px solid transparent; border-top: 5px solid #111; border-bottom: 0; flex: none; box-sizing: content-box; }
.drop.off { border-top-color: #808080; }
.vsep { width: 1px; height: 20px; background: #8a8a8a; flex: none; }
.spacer { flex: 1; }
.grip.g-right { margin: 0 -2px 0 8px; }
.vsep.v-right { margin: 0 -3px 0 -1px; }
.hl { display: flex; align-items: center; justify-content: center; width: 23px; height: 21px; background: #c4dff7; border: 1px solid #8ec3ef; flex: none; }

.workbench { flex: 1; min-height: 0; display: grid; grid-template-columns: 24px 443px 720px 22px; }
.trim { display: flex; flex-direction: column; align-items: center; }
.hgrip { width: 20px; height: 2px; margin-top: 5px; background: repeating-linear-gradient(to right, #a8a8a8 0 2px, transparent 2px 5px); flex: none; }
.trim > .hgrip:first-child { margin-top: 1px; }
.trim > .ic12 { margin-top: 7px; }
.trim > .hgrip:not(:first-child) + .ic12 { margin-top: 6px; }
.trim > .ic16 { margin-top: 8px; }
.trim-r > .ic16 + .ic16 { margin-top: 7px; }
.trim-r > .ic16 + .ic16 + .ic16 { margin-top: 5px; }
.trim-r > .ic12 + .ic16 { margin-top: 8px; }

.leftcol { display: flex; flex-direction: column; gap: 5px; min-height: 0; }
.panel { background: #f0f0f0; border: 1px solid #dadada; display: flex; flex-direction: column; min-height: 0; overflow: hidden; }
.outline { height: 220px; width: 443px; flex: none; }
.props { height: 216px; width: 443px; flex: none; }
.editor { margin-left: 4px; width: 715px; height: 440px; }

.tabbar { height: 28px; flex: none; background: #e6e6e6; display: flex; border-bottom: 1px solid #d4d4d4; }
.tab { display: flex; align-items: center; height: 28px; background: #f2f2f2; border-right: 1px solid #d4d4d4; padding: 0 8px 0 4px; gap: 3px; font-size: 14px; flex: none; }
.outline .tab { padding-top: 2px; }
.close { width: 11px; height: 11px; margin-left: 4px; }
.viewtools { margin-left: auto; display: flex; align-items: flex-start; padding-top: 1px; gap: 3px; }
.vt-props { padding-top: 0; }
.viewtools > .ic16 { margin-top: 3px; }
.minbtn { width: 12px; height: 8px; margin: 6px 0 0 2px; }
.maxbtn { width: 12px; height: 12px; margin: 7px 8px 0 8px; }
.viewtools .joined { margin-left: -3px; }
.dots { width: 8px; height: 16px; margin: 3px 8px 0 10px; }

.filter { height: 25px; margin: 3px 2px 6px 1px; padding: 0 6px; flex: none; background: #fff; border: 1px solid #7f7f7f; color: #6a6a6a; font-size: 14.300px; line-height: 25px; }

.scrollview { position: relative; flex: 1; min-height: 0; margin: 0 3px 3px 1px; background: #f0f0f0; }
.scrollview .content { position: absolute; left: 0; top: 0; right: 19px; bottom: 19px; background: #fff; overflow: hidden; }
.vbar { position: absolute; right: 0; top: 0; bottom: 19px; width: 19px; background: #f0f0f0; }
.hbar { position: absolute; left: 0; right: 0; bottom: 0; height: 19px; background: #f0f0f0; }
.vbar b, .hbar b { position: absolute; background: #cdcdcd; display: block; }
.vbar b { left: 0; right: 0; }
.hbar b { top: 0; bottom: 0; }
.arr { position: absolute; width: 7px; height: 7px; border: solid #505050; border-width: 2px 2px 0 0; }
.arr.up { left: 6px; top: 8px; transform: rotate(-45deg); }
.arr.dn { left: 6px; bottom: 10px; transform: rotate(135deg); }
.arr.lf { left: 9px; top: 6px; transform: rotate(-135deg); }
.arr.rt { right: 27px; top: 6px; transform: rotate(45deg); }

.v-outline b { top: 21px; height: 57px; }
.h-outline b { left: 21px; width: 305px; }
.v-props b { top: 21px; height: 99px; }
.h-props b { left: 21px; width: 279px; }

.tree-row { height: 23px; display: flex; align-items: center; white-space: nowrap; font-size: 14.150px; }
.tree-row.l0 { padding-left: 1px; letter-spacing: .15px; }
.tree-row.l1 { padding-left: 21px; }
.tree-row.l2 { padding-left: 41px; }
.tw { width: 20px; flex: none; height: 10px; position: relative; display: inline-block; }
.tw::after { content: ""; position: absolute; left: 6px; top: 0; width: 6px; height: 6px; border: solid #555; border-width: 0 1.500px 1.500px 0; }
.tw.open::after { transform: rotate(45deg); }
.tw.shut::after { transform: rotate(-45deg); border-color: #a8a8a8; top: 2px; left: 4px; }
.tw.none::after { display: none; }
.tree-row > .ic16, .sel > .ic16 { margin-left: 3px; }
.tree-row.l2 > .ic16, .sel > .ic16 { margin-left: 2px; margin-right: 1px; }
.label { margin-left: 4px; line-height: 23px; }
.sel { display: flex; align-items: center; background: #d6d6d6; padding-right: 2px; height: 23px; }

.prop-view { margin-top: 2px; }
.prow { height: 23px; display: grid; grid-template-columns: 140px 1fr; border-bottom: 1px solid #e8e8e8; white-space: nowrap; line-height: 24px; }
.prow > div { padding-left: 6px; height: 22px; }
.prow > div + div { border-left: 1px solid #e8e8e8; }
.prow.head { height: 25px; border-bottom: 0; line-height: 28px; }
.prow.head > div { height: 25px; }
.prow.group { height: 24px; }
.prow.group > div { height: 23px; }
.prow.group > div:first-child { display: flex; align-items: center; padding: 2px 0 0 2px; }
.prow.group .tw { width: 23px; height: 10px; }
.prow.group .tw::after { left: 6px; top: -2px; width: 7px; height: 7px; }
.prow .key { padding-left: 45px; }
.prow .val { display: flex; align-items: flex-start; gap: 3px; padding-left: 3px; }
.prow .val > svg { margin-top: 5px; }
.prow.picked .key { background: #cde8ff; }
.prow.picked .val { background: #d6d6d6; }

.form-head { height: 54px; flex: none; margin: 0 1px 0 0; background: #e7e7e7; border-bottom: 2px solid #a0a0a0; display: flex; flex-direction: column; }
.form-title { height: 31px; padding: 2px 0 0 6px; display: flex; align-items: center; gap: 3px; font-size: 14px; flex: none; position: relative; }
.menu-tri { position: absolute; right: 4px; top: 6px; width: 11px; height: 6px; }
.form-tools { display: flex; align-items: center; justify-content: flex-end; gap: 6px; height: 21px; padding-right: 3px; }

.chart-area { position: relative; flex: 1; min-height: 0; background: #f0f0f0; margin: 0 2px 0 1px; }
.chart { position: absolute; left: 0; top: 0; width: 691px; height: 310px; background: #fff; }
.v-chart { top: 0; bottom: 19px; width: 19px; right: 0; }
.v-chart b { top: 148px; height: 140px; }
.h-chart { height: 19px; }
.h-chart b { left: 21px; width: 73px; }

.ylabel { font-size: 14.400px; text-anchor: end; fill: #333; }
.band1 { fill: #e6e6ea; }
.band2 { fill: #f0f0f4; }
.grid { stroke: #b4b4b4; stroke-dasharray: 2 2; fill: none; }
.start { font-size: 12.500px; fill: #444; letter-spacing: .4px; }
.pink { fill: #fb9a99; stroke: #d48786; }
.orange { fill: #fdbf6f; stroke: #d3a368; }
.dgreen { fill: #33a02c; stroke: #2b8726; }
.blue { fill: #1f78b4; stroke: #1b6aa0; }
.lblue { fill: #a6cee3; stroke: #8fb3c8; }
.lgreen { fill: #b2df8a; stroke: #93bb72; }
.bar-w, .bar-k { font-size: 14.300px; text-anchor: middle; }
.bar-w { fill: #fff; }
.bar-k { fill: #111; }
.start-a { text-anchor: start; }
.ln-grey { stroke: #444; stroke-width: 1.600; fill: none; }
.ln-dd { stroke: #555; stroke-width: 1.600; fill: none; stroke-dasharray: 6 2 2 2 2 2; }
.ln-green { stroke: #0a800a; stroke-width: 2; fill: none; stroke-dasharray: 8 5; }
.tip-grey { fill: #444; }
.tip-green { fill: #0a800a; }
.dot-g { fill: #0a800a; }
.dot-k { fill: #444; }
.measure-h { stroke: #666; stroke-width: 1.400; fill: none; }
.measure-v { stroke: #111; stroke-width: 1.800; fill: none; }
.arrowhead { fill: #111; }
.lat-box { fill: #fff; stroke: #f7f000; stroke-width: 2.600; }
.lat-text { font-size: 13.600px; fill: #f20000; font-weight: 500; }
.frame { fill: none; stroke: #a6a6a6; }
.frame2 { stroke: #c8c8c8; fill: none; }
.axis { stroke: #c0c0c0; fill: none; }
.tick { font-size: 13.500px; font-weight: 500; text-anchor: middle; fill: #333; }
.axis-title { font-size: 15.500px; font-weight: 700; text-anchor: middle; fill: #333; letter-spacing: .6px; }

.bottom-tabs { height: 27px; flex: none; display: flex; align-items: flex-start; background: #f0f0f0; border-top: 2px solid #9f9f9f; margin-right: 2px; }
.btab { height: 25px; line-height: 23px; padding: 0 4px 0 5px; flex: none; }
.btab.on { background: #f6f6f6; border: 1px solid #c8c8c8; border-top: 0; border-radius: 0 0 4px 4px; padding: 0 4px; }

.status { height: 24px; flex: none; display: flex; align-items: center; gap: 7px; padding: 0 4px 3px 0; }
.status-text { margin-right: auto; padding-left: 4px; }
.status .grip { margin: 0 3px 0 0; }
.status .vsep { margin: 0 1px 0 -1px; }
```
